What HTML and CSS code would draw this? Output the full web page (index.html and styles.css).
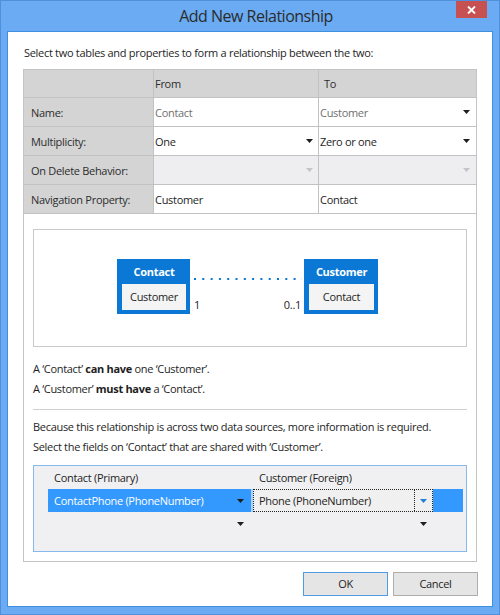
FILE: index.html
```html
<!DOCTYPE html>
<html>
<head>
<meta charset="utf-8">
<title>Add New Relationship</title>
<link rel="stylesheet" href="styles.css">
</head>
<body>
<div class="window">
  <div class="titlebar">
    <span class="title">Add New Relationship</span>
    <button class="close" aria-label="Close"><svg width="9" height="8" viewBox="0 0 9 8"><path d="M1 0.5L8 7.5M8 0.5L1 7.5" stroke="#fff" stroke-width="1.9"/></svg></button>
  </div>
  <div class="client">
    <div class="intro">Select two tables and properties to form a relationship between the two:</div>
    <div class="panel">
      <div class="props">
        <div class="cell head"></div>
        <div class="cell head from">From</div>
        <div class="cell head to">To</div>

        <div class="cell label">Name:</div>
        <div class="cell value from muted">Contact</div>
        <div class="cell value to muted"><span class="txt">Customer</span><span class="drop"><svg class="caret" width="7" height="4" viewBox="0 0 7 4"><path d="M0 0H7L3.5 4Z"/></svg></span></div>

        <div class="cell label">Multiplicity:</div>
        <div class="cell value from"><span class="txt">One</span><span class="drop"><svg class="caret" width="7" height="4" viewBox="0 0 7 4"><path d="M0 0H7L3.5 4Z"/></svg></span></div>
        <div class="cell value to"><span class="txt">Zero or one</span><span class="drop"><svg class="caret" width="7" height="4" viewBox="0 0 7 4"><path d="M0 0H7L3.5 4Z"/></svg></span></div>

        <div class="cell label">On Delete Behavior:</div>
        <div class="cell value from disabled"><span class="txt"></span><span class="drop"><svg class="caret" width="7" height="4" viewBox="0 0 7 4"><path d="M0 0H7L3.5 4Z"/></svg></span></div>
        <div class="cell value to disabled"><span class="txt"></span><span class="drop"><svg class="caret" width="7" height="4" viewBox="0 0 7 4"><path d="M0 0H7L3.5 4Z"/></svg></span></div>

        <div class="cell label">Navigation Property:</div>
        <div class="cell value from">Customer</div>
        <div class="cell value to">Contact</div>
      </div>

      <div class="diagram">
        <div class="entity">
          <div class="entity-name">Contact</div>
          <div class="entity-prop">Customer</div>
        </div>
        <div class="connector">
          <svg class="dots" width="114" height="2" viewBox="0 0 114 2"><line x1="4" y1="1" x2="112" y2="1" stroke="#0a78d4" stroke-width="2" stroke-dasharray="2 6.3"/></svg>
          <div class="ends"><span>1</span><span>0..1</span></div>
        </div>
        <div class="entity wide">
          <div class="entity-name">Customer</div>
          <div class="entity-prop">Contact</div>
        </div>
      </div>

      <p class="line first">A ‘Contact’ <b>can have</b> one ‘Customer’.</p>
      <p class="line">A ‘Customer’ <b>must have</b> a ‘Contact’.</p>
      <div class="sep"></div>
      <p class="line third">Because this relationship is across two data sources, more information is required.</p>
      <p class="line">Select the fields on ‘Contact’ that are shared with ‘Customer’.</p>

      <div class="fields">
        <div class="frow fhead">
          <div class="fc1">Contact (Primary)</div>
          <div class="fc2">Customer (Foreign)</div>
        </div>
        <div class="frow selected">
          <div class="fc1"><span class="txt">ContactPhone (PhoneNumber)</span><span class="fdrop"><svg class="caret" width="7" height="4" viewBox="0 0 7 4"><path d="M0 0H7L3.5 4Z"/></svg></span></div>
          <div class="fgap"></div>
          <div class="combo"><span class="txt">Phone (PhoneNumber)</span><span class="cdrop"><svg class="caret blue" width="7" height="4" viewBox="0 0 7 4"><path d="M0 0H7L3.5 4Z"/></svg></span></div>
        </div>
        <div class="frow">
          <div class="fc1"><span class="txt"></span><span class="fdrop"><svg class="caret" width="7" height="4" viewBox="0 0 7 4"><path d="M0 0H7L3.5 4Z"/></svg></span></div>
          <div class="fgap plain"></div>
          <div class="combo plain"><span class="txt"></span><span class="cdrop"><svg class="caret" width="7" height="4" viewBox="0 0 7 4"><path d="M0 0H7L3.5 4Z"/></svg></span></div>
        </div>
      </div>
    </div>
    <div class="buttons">
      <button class="btn default">OK</button>
      <button class="btn">Cancel</button>
    </div>
  </div>
</div>
</body>
</html>
```
FILE: styles.css
```css
* { box-sizing: border-box; }
html, body { margin: 0; padding: 0; }
body {
  width: 500px;
  height: 615px;
  overflow: hidden;
  font-family: "Open Sans", "Noto Sans", sans-serif;
  font-size: 11px;
  letter-spacing: -0.3px;
  color: #1e1e1e;
}
.window {
  position: relative;
  width: 500px;
  height: 615px;
  background: #6aabf3;
  border: 1px solid #4f90dc;
  padding: 0 6px 7px;
  display: flex;
  flex-direction: column;
}
.titlebar {
  height: 30px;
  display: flex;
  align-items: center;
  justify-content: center;
}
.title {
  font-size: 16px;
  letter-spacing: -0.5px;
  color: #2b2b2b;
  padding-left: 12px;
}
.close {
  position: absolute;
  top: 0;
  right: 12px;
  width: 31px;
  height: 17px;
  background: #c75050;
  border: 0;
  padding: 0;
  display: flex;
  align-items: center;
  justify-content: center;
}
.client {
  flex: 1;
  background: #fff;
  border: 1px solid #3d8fe0;
  padding: 11px 15px 0;
  display: flex;
  flex-direction: column;
}
.intro {
  line-height: 20px;
  margin-left: 1px;
  white-space: nowrap;
}
.panel {
  margin-top: 6px;
  border: 1px solid #c4c4c4;
  padding-bottom: 9px;
}
.props {
  display: grid;
  grid-template-columns: 129px 164px 157px;
  grid-template-rows: 27px repeat(4, 28px);
  gap: 1px;
  background: #c2c2c2;
  border-bottom: 1px solid #c2c2c2;
}
.cell {
  display: flex;
  align-items: center;
  line-height: 15px;
  background: #fff;
  white-space: nowrap;
}
.cell.head, .cell.label { background: #d4d4d4; color: #2d2d2d; }
.cell.label { padding-left: 7px; }
.cell.from { padding-left: 1px; }
.cell.to { padding-left: 1px; }
.cell.head.to { padding-left: 5px; }
.cell.muted { color: #707070; }
.cell.disabled { background: #eeeef0; }
.cell .txt { flex: 1; }
.drop {
  width: 17px;
  display: flex;
  justify-content: center;
  align-items: center;
}
.to .drop { margin-right: 1px; }
.caret { display: block; fill: #1e1e1e; }
.disabled .caret { fill: #c3c3c8; }
.caret.blue { fill: #1f7fdc; }

.diagram {
  margin: 15px 9px 0;
  height: 118px;
  border: 1px solid #c8c8c8;
  display: flex;
  justify-content: center;
  align-items: center;
  padding-right: 5px;
  padding-bottom: 3px;
}
.entity {
  width: 73px;
  height: 55px;
  background: #0a78d4;
  padding: 0 4px 4px 5px;
  display: flex;
  flex-direction: column;
}
.entity.wide { width: 74px; }
.entity-name {
  height: 25px;
  line-height: 25px;
  text-align: center;
  color: #fff;
  font-weight: bold;
}
.entity-prop {
  flex: 1;
  background: #f4f4f4;
  line-height: 26px;
  text-align: center;
}
.connector {
  width: 114px;
  height: 55px;
  padding-top: 19px;
  display: flex;
  flex-direction: column;
}
.dots { display: block; }
.ends {
  margin-top: 17px;
  line-height: 15px;
  display: flex;
  justify-content: space-between;
  padding: 0 3px 0 4px;
}
.line {
  margin: 0 9px;
  line-height: 20px;
  white-space: nowrap;
}
.line.first { margin-top: 12px; }
.sep {
  margin: 10px 9px 0;
  height: 1px;
  background: #cfcfcf;
}
.line.third { margin-top: 7px; }

.fields {
  margin: 8px 9px 0;
  height: 87px;
  border: 1px solid #86b9ec;
  background: #f0f0f2;
  padding: 0 3px 0 14px;
}
.frow {
  height: 23px;
  display: flex;
  align-items: stretch;
  line-height: 15px;
}
.fhead .fc1, .fhead .fc2 { display: flex; align-items: center; }
.fhead .fc1 { width: 205px; padding-left: 6px; }
.fhead .fc2 { padding-left: 6px; }
.fc1 {
  width: 203px;
  display: flex;
  align-items: center;
  padding-left: 6px;
  white-space: nowrap;
}
.fc1 .txt, .combo .txt { flex: 1; }
.fdrop {
  width: 22px;
  align-self: stretch;
  display: flex;
  align-items: center;
  justify-content: center;
}
.selected { background: #3399ff; }
.selected .fc1 { color: #fff; }
.fgap { width: 2px; background: #a9d1fa; }
.fgap.plain { background: transparent; }
.combo {
  width: 180px;
  display: flex;
  align-items: center;
  background: #f0f0f0;
  border: 1px dotted #222;
  padding-left: 5px;
  white-space: nowrap;
}
.combo.plain { background: transparent; border-color: transparent; }
.cdrop {
  width: 18px;
  align-self: stretch;
  display: flex;
  align-items: center;
  justify-content: center;
  border-left: 1px dotted #222;
}
.combo.plain .cdrop { border-left-color: transparent; }

.buttons {
  margin-top: 10px;
  margin-right: -1px;
  display: flex;
  justify-content: flex-end;
  gap: 5px;
}
.btn {
  width: 85px;
  height: 24px;
  padding: 0;
  font-family: inherit;
  font-size: 11px;
  letter-spacing: inherit;
  color: #1e1e1e;
  line-height: 22px;
  background: #e5e5e5;
  border: 1px solid #adadad;
}
.btn.default { border-color: #4f9be6; }
```
